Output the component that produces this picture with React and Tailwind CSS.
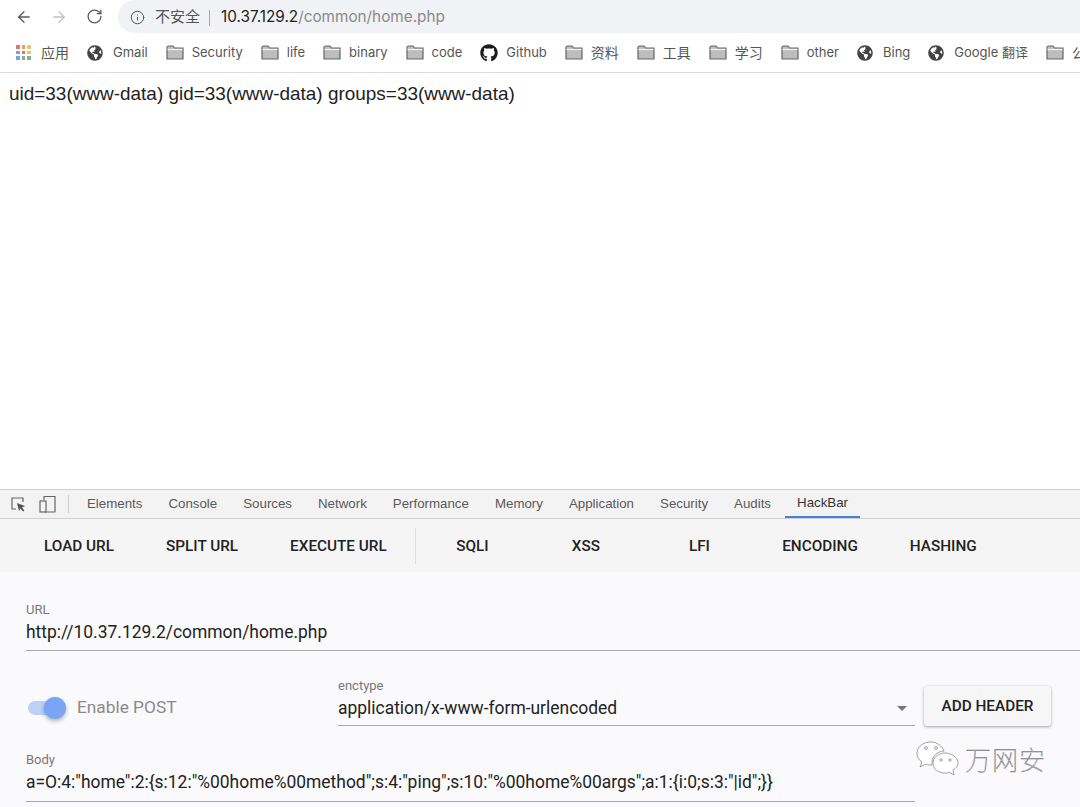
import { ArrowLeft, ArrowRight, RotateCw, Info } from 'lucide-react'
import { FaGithub, FaGlobeAmericas } from 'react-icons/fa'

const CJK = "font-['Inter','Noto_Sans_CJK_SC',sans-serif]"

const BOOKMARKS = [
  { icon: 'apps', label: '应用', cjk: true },
  { icon: 'globe', label: 'Gmail' },
  { icon: 'folder', label: 'Security' },
  { icon: 'folder', label: 'life' },
  { icon: 'folder', label: 'binary' },
  { icon: 'folder', label: 'code' },
  { icon: 'github', label: 'Github' },
  { icon: 'folder', label: '资料', cjk: true },
  { icon: 'folder', label: '工具', cjk: true },
  { icon: 'folder', label: '学习', cjk: true },
  { icon: 'folder', label: 'other' },
  { icon: 'globe', label: 'Bing' },
  { icon: 'globe', label: 'Google 翻译' },
  { icon: 'folder', label: '公', cjk: true },
]

const TABS = ['Elements', 'Console', 'Sources', 'Network', 'Performance', 'Memory', 'Application', 'Security', 'Audits']

const APP_DOTS = ['#d9786e', '#e0a070', '#e8c56a', '#7ba2e0', '#d9786e', '#e8c56a', '#7ba2e0', '#7fb48a', '#7fb48a']

function FolderIcon() {
  return (
    <svg width="18" height="15" viewBox="0 0 18 15" className="shrink-0">
      <path d="M1 2.5 Q1 1 2.5 1 H7 L8.5 3 H17 V14 H1 Z" fill="#bdbdbd" stroke="#666" strokeWidth="1.2" />
      <path d="M1.5 4.5 H16.5" stroke="#f2f2f2" strokeWidth="1.2" />
    </svg>
  )
}

function AppsIcon() {
  return (
    <div className="grid w-[15px] shrink-0 grid-cols-3 gap-[2px]">
      {APP_DOTS.map((c, i) => (
        <span key={i} className="h-[3.5px] w-[3.5px]" style={{ backgroundColor: c }} />
      ))}
    </div>
  )
}

function BookmarkIcon({ type }) {
  if (type === 'folder') return <FolderIcon />
  if (type === 'apps') return <AppsIcon />
  if (type === 'github') return <FaGithub className="h-[18px] w-[18px] shrink-0 text-[#1b1b1b]" />
  return <FaGlobeAmericas className="h-4 w-4 shrink-0 text-[#444]" />
}

function WeChatMark() {
  return (
    <svg width="44" height="38" viewBox="0 0 44 38" fill="none" stroke="#8a8a8a" strokeWidth="0.8" className="shrink-0">
      <path d="M15 2 C7 2 1 7 1 13 C1 17 3 20 6 22 L4 27 L10 24 C12 25 14 25 16 25 C15 16 22 11 28 11 C26 6 21 2 15 2 Z" fill="#fff" />
      <path d="M29 13 C22 13 17 18 17 23 C17 29 22 33 29 33 C31 33 32 33 33 32 L38 35 L37 30 C40 28 42 26 42 23 C42 18 36 13 29 13 Z" fill="#fff" />
      <circle cx="10" cy="8" r="1.4" />
      <circle cx="20" cy="8" r="1.4" />
      <circle cx="25" cy="20" r="1.2" />
      <circle cx="34" cy="20" r="1.2" />
    </svg>
  )
}

function InspectIcon() {
  return (
    <svg width="16" height="16" viewBox="0 0 16 16" fill="none" className="shrink-0">
      <path d="M6 13 H2 V2 H13 V6" stroke="#666" strokeWidth="1.2" />
      <path d="M7 7 L15 10 L12 11.5 L14.5 14.5 L13 15.5 L10.5 12.5 L9 15 Z" fill="#555" />
    </svg>
  )
}

function DeviceIcon() {
  return (
    <svg width="17" height="18" viewBox="0 0 17 18" fill="none" stroke="#666" strokeWidth="1.2" className="shrink-0">
      <path d="M5 5 V1.5 H16 V17 H6" />
      <rect x="1" y="6" width="6" height="11" />
    </svg>
  )
}

function HackButton({ children, min }) {
  return (
    <button className={`h-9 px-[26px] text-center text-[15.3px] leading-9 font-medium text-[#222] ${min ? 'min-w-[113.5px]' : ''}`}>
      {children}
    </button>
  )
}

export default function App() {
  return (
    <div className={`relative flex h-[807px] w-[1080px] flex-col overflow-hidden bg-white ${CJK}`}>
      {/* browser toolbar */}
      <div className="flex h-[33px] shrink-0 items-center">
        <div className="flex w-[118px] shrink-0 items-center pl-[15px]">
          <ArrowLeft size={18} strokeWidth={1.7} className="text-[#5a5a5a]" />
          <ArrowRight size={18} strokeWidth={1.7} className="ml-[17px] text-[#c4c4c4]" />
          <RotateCw size={17} strokeWidth={1.8} className="ml-[18px] text-[#5a5a5a]" />
        </div>
        <div className="flex h-full flex-1 items-center rounded-l-[17px] bg-[#f1f2f6] pt-[2px] pl-[12px] text-[15px]">
          <Info size={15} strokeWidth={1.6} className="text-[#555]" />
          <span className="ml-[10px] text-[#555]">不安全</span>
          <span className="mr-[11px] ml-[9px] h-[16px] w-px bg-[#a8a8a8]" />
          <span className="font-['Inter'] text-[15.3px] text-[#222]">10.37.129.2</span>
          <span className="font-['Inter'] text-[15.3px] text-[#8a8a8a]">/common/home.php</span>
        </div>
      </div>

      {/* bookmarks */}
      <div className="flex h-[39px] shrink-0 items-center gap-[18px] pl-[16px] whitespace-nowrap">
        {BOOKMARKS.map((b, i) => (
          <div
            key={i}
            className={`flex shrink-0 items-center text-[#555] ${b.cjk ? 'text-[14px]' : 'text-[13px]'} ${b.icon === 'folder' || b.icon === 'github' ? 'gap-[8px]' : 'gap-[10px]'}`}
          >
            <BookmarkIcon type={b.icon} />
            <span>{b.label}</span>
          </div>
        ))}
      </div>

      {/* page */}
      <div className="h-[417px] shrink-0 border-t border-[#dcdcdc] pt-[9px] pl-[9px] font-['Liberation_Sans',sans-serif] text-[18.95px] leading-[24px] text-[#222]">
        uid=33(www-data) gid=33(www-data) groups=33(www-data)
      </div>

      {/* devtools tabs */}
      <div className="flex h-[30px] shrink-0 items-center border-y border-[#d0d0d0] bg-[#f3f3f3] pl-[10px] font-['Liberation_Sans',sans-serif] text-[13.3px] text-[#5a5a5a]">
        <InspectIcon />
        <span className="ml-[13px]"><DeviceIcon /></span>
        <span className="ml-[12px] h-[18px] w-px bg-[#ccc]" />
        <div className="ml-[18px] flex h-full items-center gap-[26px]">
          {TABS.map(t => (
            <span key={t}>{t}</span>
          ))}
          <span className="-mx-[12px] flex h-full items-center border-b-2 border-[#4a80d8] px-[12px] text-[#333]">HackBar</span>
        </div>
      </div>

      {/* hackbar nav */}
      <div className="flex h-[53px] shrink-0 items-center bg-[#f5f5f5] pl-[18px] font-['Roboto',sans-serif]">
        <HackButton>LOAD URL</HackButton>
        <HackButton>SPLIT URL</HackButton>
        <HackButton>EXECUTE URL</HackButton>
        <span className="ml-[2px] h-9 w-px bg-[#dedede]" />
        <HackButton min>SQLI</HackButton>
        <HackButton min>XSS</HackButton>
        <HackButton min>LFI</HackButton>
        <HackButton>ENCODING</HackButton>
        <HackButton>HASHING</HackButton>
      </div>

      {/* form */}
      <div className="flex flex-1 flex-col bg-[#fafafc] pl-[26px] font-['Roboto',sans-serif]">
        <div className="mt-[30px] border-b border-[#a8a8a8] pb-[7px]">
          <div className="text-[13px] leading-[15px] text-[#777]">URL</div>
          <div className="mt-[5px] text-[17.45px] leading-[21px] text-[#222]">http://10.37.129.2/common/home.php</div>
        </div>

        <div className="mt-[27px] flex items-start">
          <div className="mt-[19px] flex w-[312px] shrink-0 items-center">
            <div className="relative ml-[2px] h-[14px] w-[34px] rounded-full bg-[#bcd0f8]">
              <div className="absolute top-[-4px] right-[-4px] h-[22px] w-[22px] rounded-full bg-[#7aa5f5] shadow-[0_2px_4px_rgba(0,0,0,0.3)]" />
            </div>
            <span className="ml-[15px] text-[17.3px] leading-[21px] text-[#8a8a8a]">Enable POST</span>
          </div>
          <div className="w-[577px] shrink-0 border-b border-[#a8a8a8] pb-[6px]">
            <div className="text-[13px] leading-[15px] text-[#777]">enctype</div>
            <div className="mt-[5px] flex items-center justify-between pr-[8px] text-[17.45px] leading-[21px] text-[#222]">
              <span>application/x-www-form-urlencoded</span>
              <span className="h-0 w-0 border-x-[5px] border-t-[5px] border-x-transparent border-t-[#777]" />
            </div>
          </div>
          <button className="mt-[8px] ml-[9px] h-[40px] w-[127px] rounded-[3px] bg-[#f6f6f6] text-[15.3px] font-medium text-[#222] shadow-[0_1px_3px_rgba(0,0,0,0.35)]">
            ADD HEADER
          </button>
        </div>

        <div className="mt-[26px] w-[889px] border-b border-[#a8a8a8] pb-[8px]">
          <div className="text-[13px] leading-[15px] text-[#777]">Body</div>
          <div className="mt-[5px] text-[17.45px] leading-[21px] whitespace-nowrap text-[#222]">
            {'a=O:4:"home":2:{s:12:"%00home%00method";s:4:"ping";s:10:"%00home%00args";a:1:{i:0;s:3:"|id";}}'}
          </div>
        </div>
      </div>

      {/* watermark */}
      <div className="absolute top-[740px] left-[916px] flex items-center gap-[5px]">
        <WeChatMark />
        <span className="font-['Noto_Sans_CJK_SC',sans-serif] text-[26px] leading-[30px] font-thin tracking-[1px] text-white [-webkit-text-stroke:0.5px_#777]">万网安</span>
      </div>
    </div>
  )
}
